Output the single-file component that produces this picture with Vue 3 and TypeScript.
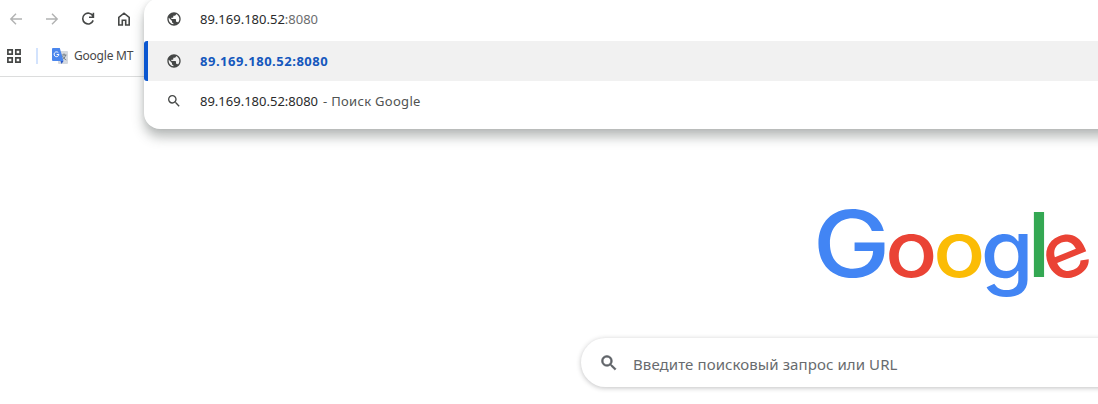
<script setup lang="ts">
interface Glyph { char: string; color: string; size: number; weight: number; place: string }

const wordmark: Glyph[] = [
  { char: 'G', color: '#4285f4', size: 92, weight: 500, place: 'translate(-5.2 68) scale(1.13 1)' },
  { char: 'o', color: '#ea4335', size: 77, weight: 500, place: 'translate(67.2 68) scale(1.12 1)' },
  { char: 'o', color: '#fbbc05', size: 77, weight: 500, place: 'translate(115.2 68) scale(1.12 1)' },
  { char: 'g', color: '#4285f4', size: 77, weight: 500, place: 'translate(162.8 69.5) scale(1.11 1.06)' },
  { char: 'l', color: '#34a853', size: 89, weight: 600, place: 'translate(210.4 68) scale(.9 1)' },
  { char: 'e', color: '#ea4335', size: 77, weight: 500, place: 'rotate(-22 249.5 47) translate(224.8 68) scale(1.05 1)' },
]
const globe = 'M12 2C6.48 2 2 6.48 2 12s4.48 10 10 10 10-4.48 10-10S17.52 2 12 2zm-1 17.93c-3.95-.49-7-3.85-7-7.93 0-.62.08-1.21.21-1.79L9 15v1c0 1.1.9 2 2 2v1.93zm6.9-2.54c-.26-.81-1-1.39-1.9-1.39h-1v-3c0-.55-.45-1-1-1H8v-2h2c.55 0 1-.45 1-1V7h2c1.1 0 2-.9 2-2v-.41c2.93 1.19 5 4.06 5 7.41 0 2.08-.8 3.97-2.1 5.39z'
const lens = 'M15.5 14h-.79l-.28-.27A6.47 6.47 0 0 0 16 9.5 6.5 6.5 0 1 0 9.5 16c1.61 0 3.09-.59 4.23-1.57l.27.28v.79l5 4.99L20.49 19l-4.99-5zm-6 0C7.01 14 5 11.99 5 9.5S7.01 5 9.5 5 14 7.01 14 9.5 11.99 14 9.5 14z'
</script>

<template>
  <div class="browser">
    <header class="chrome">
      <nav class="toolbar">
        <svg class="tool muted" viewBox="0 0 16 16"><path d="M14 8H3M8 2.8 2.8 8 8 13.2" /></svg>
        <svg class="tool muted" viewBox="0 0 16 16"><path d="M2 8h11M8 2.8 13.2 8 8 13.2" /></svg>
        <svg class="tool" viewBox="0 0 16 16"><path d="M12.9 5A5.4 5.4 0 1 0 13.2 9.4M13.4 1.8v4.4H9" /></svg>
        <svg class="tool" viewBox="0 0 16 16"><path d="M2.8 14V6.3L8 2.2l5.2 4.1V14H9.7V9.3H6.3V14z" /></svg>
      </nav>
      <div class="bookmarks">
        <svg class="apps" viewBox="0 0 14 14"><path d="M.9.9h4.3v4.3H.9zM8.8.9h4.3v4.3H8.8zM.9 8.8h4.3v4.3H.9zM8.8 8.8h4.3v4.3H8.8z" /></svg>
        <span class="divider"></span>
        <svg class="translate" viewBox="0 0 16 16">
          <rect x="6" y="3" width="10" height="13" rx="1" fill="#d5d9df" />
          <path d="M8.5 13h3L9.5 16z" fill="#2856c4" />
          <path d="M9.5 7h5M12 5.5V7M13.5 7c-.4 2.5-2 4-3.5 5M10.5 8c.8 2 2.2 3.2 3.8 4" fill="none" stroke="#69747e" stroke-width=".9" />
          <path d="M1 0h6.8l3.7 13H1a1 1 0 0 1-1-1V1a1 1 0 0 1 1-1z" fill="#4a86ed" />
          <path d="M6.4 4.8a2.4 2.4 0 1 0 .5 1.7H4.7" fill="none" stroke="#fff" stroke-width="1" />
        </svg>
        <span class="bookmark-name">Google MT</span>
      </div>
    </header>

    <section class="omnibox">
      <div class="row address">
        <svg class="icon" viewBox="0 0 24 24"><path :d="globe" /></svg>
        <span class="url">89.169.180.52<span class="port">:8080</span></span>
      </div>
      <div class="row selected">
        <svg class="icon" viewBox="0 0 24 24"><path :d="globe" /></svg>
        <span class="match">89.169.180.52:8080</span>
      </div>
      <div class="row">
        <svg class="icon" viewBox="0 0 24 24"><path :d="lens" /></svg>
        <span class="url">89.169.180.52:8080</span><span class="hint">- Поиск Google</span>
      </div>
    </section>

    <main class="page">
      <svg class="logo" viewBox="0 0 280 100" role="img" aria-label="Google">
        <text v-for="(g, i) in wordmark" :key="i" :transform="g.place" :fill="g.color" :font-size="g.size" :font-weight="g.weight">{{ g.char }}</text>
      </svg>
      <div class="search">
        <svg class="search-icon" viewBox="0 0 24 24"><path :d="lens" /></svg>
        <span>Введите поисковый запрос или URL</span>
      </div>
    </main>
  </div>
</template>

<style>
body { margin: 0; background: #fff; overflow: hidden; }
</style>
<style scoped>
.browser { position: relative; width: 1098px; height: 404px; overflow: hidden; background: #fff; font-family: "Noto Sans", "Open Sans", sans-serif; }
.browser * { box-sizing: border-box; }
svg { display: block; flex: none; }
.chrome { height: 77px; border-bottom: 1px solid #dcdddd; }
.toolbar { display: flex; gap: 20px; height: 38px; padding-left: 8px; align-items: center; }
.tool { width: 16px; height: 16px; fill: none; stroke: #454746; stroke-width: 1.6; }
.muted { stroke: #b1b2b2; stroke-width: 1.4; }
.bookmarks { display: flex; height: 36px; padding-left: 7px; align-items: center; }
.apps { width: 14px; height: 14px; fill: none; stroke: #454746; stroke-width: 1.7; }
.divider { width: 2px; height: 16px; margin: 0 14px 0 15px; background: #d3e3fd; }
.translate { width: 16px; height: 16px; }
.bookmark-name { margin-left: 6px; font-size: 12px; line-height: 16px; letter-spacing: -.22px; color: #474747; white-space: nowrap; }
.omnibox { position: absolute; left: 144px; top: -2px; width: 980px; height: 131px; padding-top: 2px; border-radius: 16px; background: #fff; box-shadow: 0 8px 12px rgba(60, 70, 66, .36), 0 0 5px rgba(60, 70, 66, .1); }
.row { display: flex; align-items: center; height: 40px; padding-left: 22px; font-size: 13px; white-space: nowrap; color: #292a2b; }
.address { height: 41px; padding-bottom: 3px; }
.selected { padding-left: 18px; border-left: 4px solid #0b57d0; border-radius: 3px 0 0 3px; background: #f1f1f1; }
.icon { width: 16px; height: 16px; margin-right: 18px; fill: #454746; }
.port { color: #6b6d6e; }
.match { color: #1558bd; font-weight: 700; letter-spacing: .53px; }
.hint { margin-left: 5px; letter-spacing: .3px; color: #505352; }
.page { padding: 132px 0 0 581px; }
.logo { width: 280px; height: 100px; margin-left: 237px; overflow: visible; font-family: Inter, sans-serif; }
.search { display: flex; align-items: center; width: 561px; height: 49px; margin-top: 29px; padding: 2px 0 0 18px; border-radius: 25px; background: #fff; box-shadow: 0 1px 5px rgba(32, 33, 36, .28); color: #686b6e; font-size: 15px; letter-spacing: .09px; white-space: nowrap; }
.search-icon { width: 20px; height: 20px; margin: -2px 14px 0 0; fill: #5f6368; stroke: #5f6368; stroke-width: .7; }
</style>
